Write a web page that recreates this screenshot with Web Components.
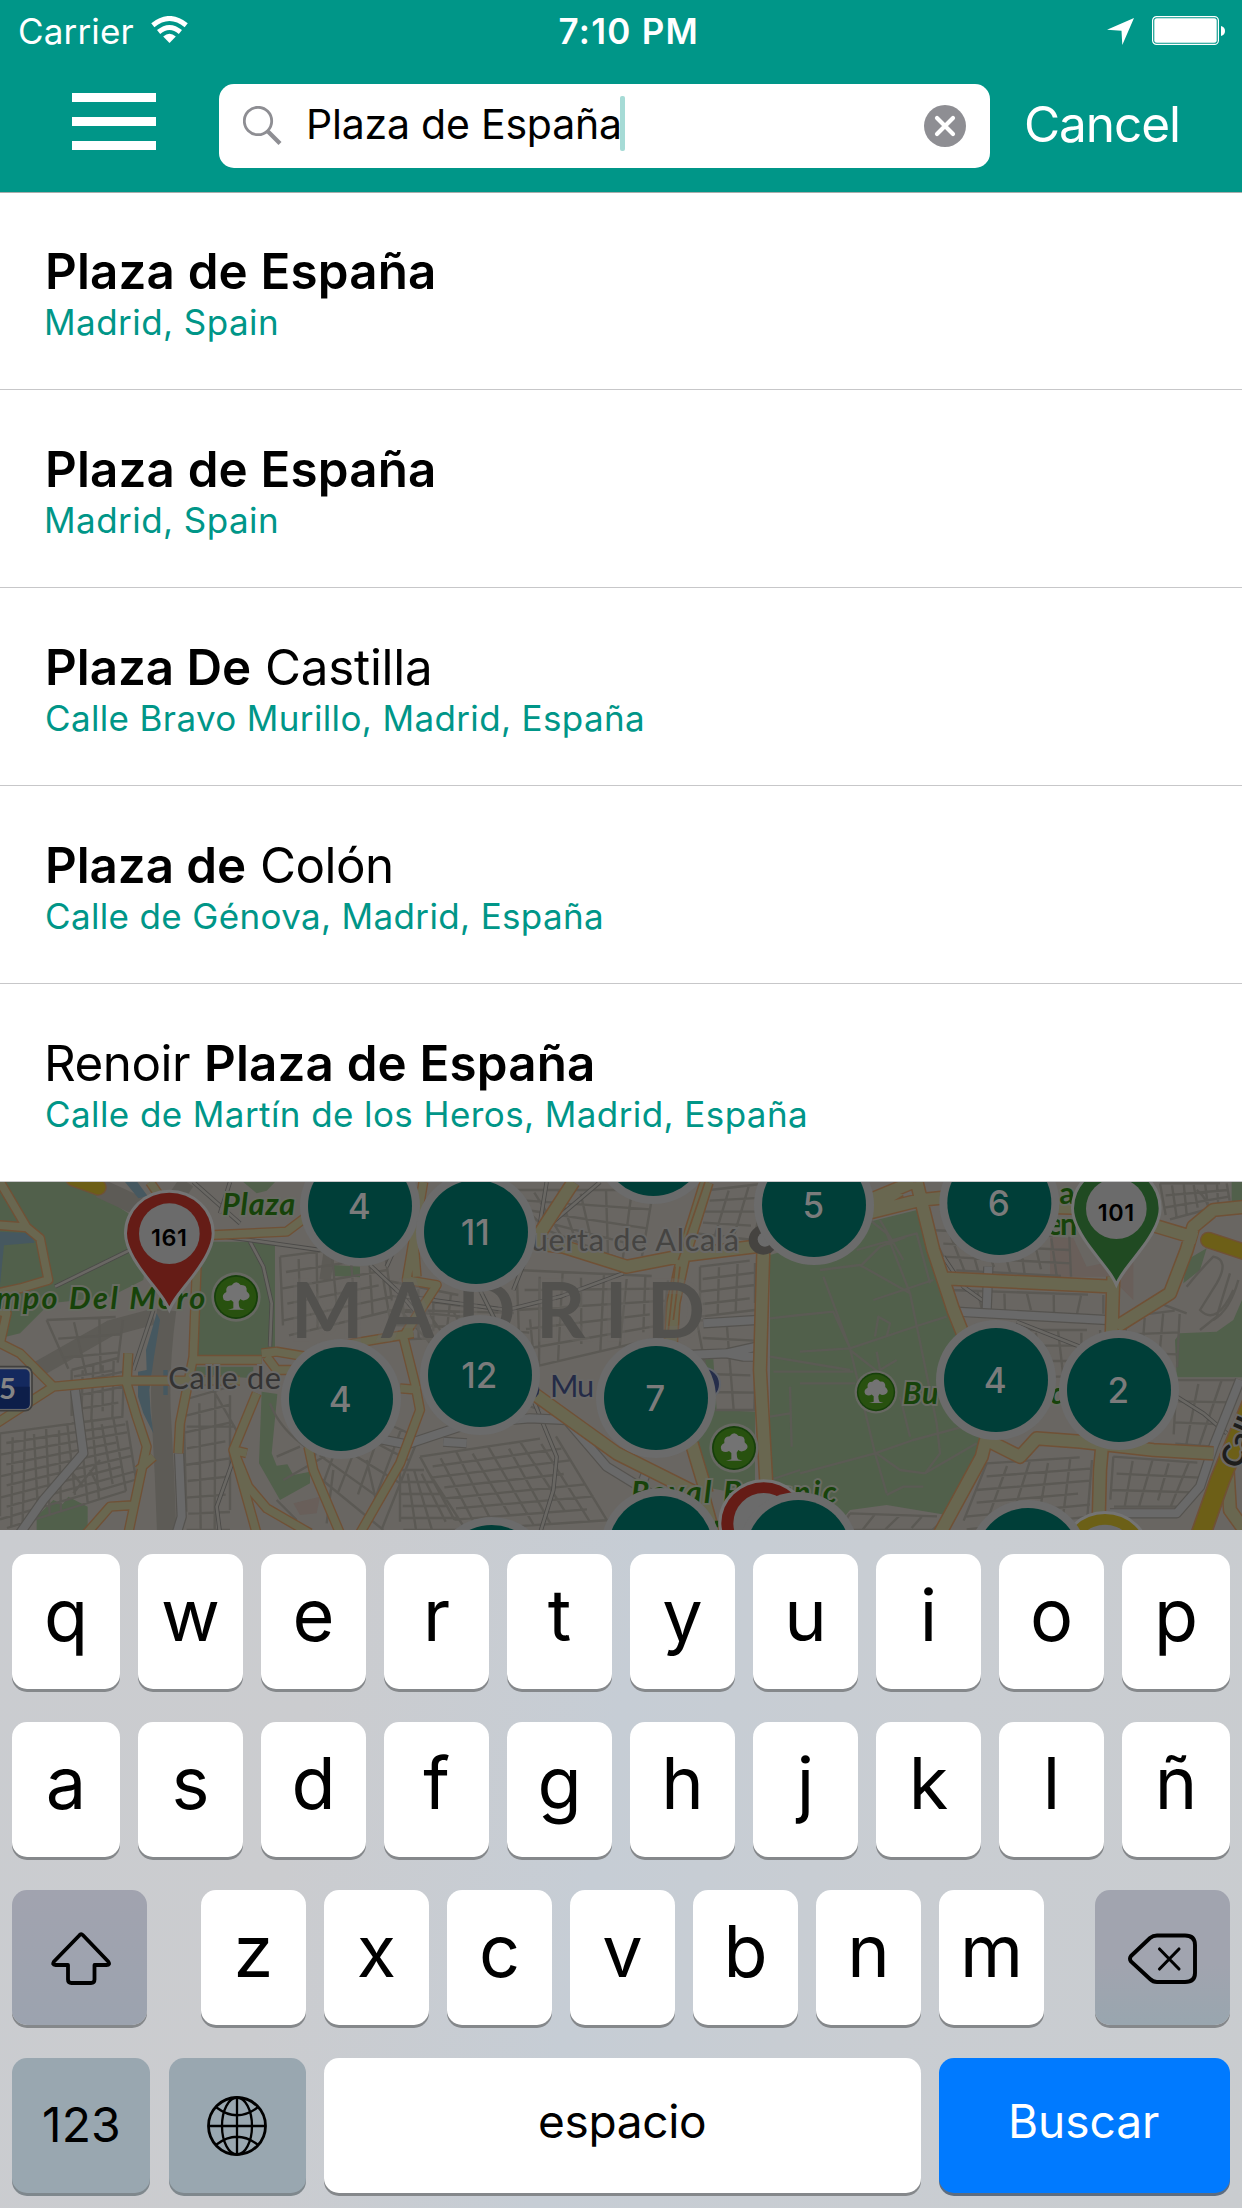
<!DOCTYPE html>
<html lang="es">
<head>
<meta charset="utf-8">
<title>Plaza de España</title>
<style>
html,body{margin:0;padding:0}
body{width:1242px;height:2208px;overflow:hidden;background:#fff;font-family:Inter,"Liberation Sans",sans-serif;color:#000}
</style>
</head>
<body>
<app-screen></app-screen>
<script>
function define(name, html, setup){
  customElements.define(name, class extends HTMLElement{
    connectedCallback(){
      if(this.shadowRoot) return;
      const root=this.attachShadow({mode:'open'});
      root.innerHTML=html;
      if(setup) setup.call(this,root);
    }
  });
}

define('status-bar',`<style>
:host{display:grid;grid-template-columns:1fr auto 1fr;height:60px;line-height:62px;font-size:35px;color:#fff;padding:0 16px 0 20px}
.l,.r{display:flex;align-items:flex-start}
.r{justify-content:flex-end}
.time{font-weight:600;margin-left:9px}
svg{display:block;flex:none}
.wifi{margin:16px 0 0 17px}
.loc{margin:18px 18px 0 0}
.bat{margin-top:16px}
</style>
<div class="l"><ink-text w="113.500">Carrier</ink-text>
<svg class="wifi" width="37" height="28" viewBox="0 0 37 28"><g fill="none" stroke="#fff" stroke-width="5"><path d="M1.800 9.200Q18.500 -4.200 35.200 9.200"/><path d="M7.600 16Q18.500 7 29.400 16"/></g><path d="M18.500 27L12.200 20.500Q18.500 15.200 24.800 20.500Z" fill="#fff"/></svg></div>
<ink-text class="time" w="136">7:10 PM</ink-text>
<div class="r"><svg class="loc" width="27" height="27" viewBox="0 0 27 27"><path d="M27 0L15.300 27L14.500 12.800L0 11.800Z" fill="#fff"/></svg>
<svg class="bat" width="74" height="29" viewBox="0 0 74 29"><rect x=".6" y=".6" width="65.800" height="27.800" rx="4" fill="none" stroke="#fff" stroke-width="1.200"/><rect x="2.300" y="2.300" width="62.400" height="24.400" rx="2.500" fill="#fff"/><path d="M69 10Q73 11 73 15Q73 19 69 20Z" fill="#fff"/></svg></div>`);

define('search-field',`<style>
:host{display:flex;align-items:center;box-sizing:border-box;width:771px;height:84px;border-radius:15px;background:#fff;color:#000;font-size:41px;line-height:84px;padding:0 24px}
svg{flex:none;display:block}
.q{margin-right:27px}
::slotted(ink-text){margin-bottom:4px}
i{width:5px;height:55px;border-radius:2px;background:#a6dbd6;margin:0 auto 5px 1px}
</style>
<svg class="q" width="39" height="40" viewBox="0 0 39 40"><circle cx="15" cy="15" r="13.700" fill="none" stroke="#8e8e93" stroke-width="2.800"/><path d="M25 25.500L37 37.500" stroke="#8e8e93" stroke-width="4.200"/></svg>
<slot></slot><i></i>
<svg width="42" height="42" viewBox="0 0 42 42"><circle cx="21" cy="21" r="21" fill="#8e8e93"/><path d="M13 13L29 29M29 13L13 29" stroke="#fff" stroke-width="4.200" stroke-linecap="round"/></svg>`);

define('nav-bar',`<style>
:host{display:flex;align-items:center;height:132px;padding-left:72px;color:#fff}
.menu{display:flex;flex-direction:column;gap:15px;width:84px;margin:0 63px 9px 0}
.menu b{height:9px;background:#fff}
.cancel{margin:0 0 4px 36px;font-size:49.500px;line-height:60px}
</style>
<div class="menu"><b></b><b></b><b></b></div>
<search-field><ink-text w="310">Plaza de España</ink-text></search-field>
<ink-text class="cancel" w="152">Cancel</ink-text>`);

define('result-row',`<style>
:host{display:block;box-sizing:border-box;height:198px;border-bottom:1px solid #c7c7c9;padding:50px 0 0 47px;background:#fff}
.t{display:flex;gap:17px;height:58px;line-height:58px;font-size:49.300px;margin-left:1px}
.s{height:44px;line-height:44px;font-size:35px;color:#009688}
</style><div class="t"><slot name="title"></slot></div><div class="s"><slot></slot></div>`);

define('result-list',`<style>
:host{display:flex;flex-direction:column;position:relative}
:host::before{content:"";height:1px;margin-bottom:-1px;background:#a9adac;z-index:1}
.b{font-weight:600}
</style>
<result-row><ink-text slot="title" class="b" w="385">Plaza de España</ink-text><ink-text w="229">Madrid, Spain</ink-text></result-row>
<result-row><ink-text slot="title" class="b" w="385">Plaza de España</ink-text><ink-text w="229">Madrid, Spain</ink-text></result-row>
<result-row><ink-text slot="title" class="b" w="202">Plaza De</ink-text><ink-text slot="title" w="162">Castilla</ink-text><ink-text w="595">Calle Bravo Murillo, Madrid, España</ink-text></result-row>
<result-row><ink-text slot="title" class="b" w="197">Plaza de</ink-text><ink-text slot="title" w="129">Colón</ink-text><ink-text w="554">Calle de Génova, Madrid, España</ink-text></result-row>
<result-row><ink-text slot="title" w="142">Renoir</ink-text><ink-text slot="title" class="b" w="385">Plaza de España</ink-text><ink-text w="758">Calle de Martín de los Heros, Madrid, España</ink-text></result-row>`);

const road=(d,w,fill,edge,e=7)=>`<path d="${d}" stroke="${edge}" stroke-width="${w+e}"/><path d="${d}" stroke="${fill}" stroke-width="${w}"/>`;
function mesh(a,b,c,d,nu,nv){
  const P=(u,v)=>[0,1].map(i=>((1-v)*((1-u)*a[i]+u*b[i])+v*((1-u)*d[i]+u*c[i])).toFixed(0)).join(' ');
  let s='';
  for(let i=0;i<=nu;i++){const j=(i%3)*.01;s+=`M${P(i/nu+j,i%2?.06:0)}L${P(i/nu-j,i%3?1:.86)}`}
  for(let i=0;i<=nv;i++)s+=`M${P(i%2?.05:0,i/nv)}L${P(i%3?1:.9,i/nv)}`;
  return s;
}
const streets=[
  mesh([0,790],[370,740],[420,950],[0,1080],11,9),
  mesh([215,600],[370,560],[370,740],[215,760],5,4),
  mesh([550,690],[690,650],[690,1080],[560,1080],3,8),
  mesh([140,450],[370,440],[350,600],[215,620],3,3),
  mesh([1000,690],[1250,800],[1150,1080],[930,900],5,4),
  mesh([1260,860],[1660,800],[1830,1050],[1380,1080],8,7),
  mesh([1200,900],[1280,900],[1400,1080],[1200,1080],4,5),
  mesh([1520,60],[1960,60],[1920,290],[1640,180],6,4),
  mesh([1550,300],[2000,320],[1990,500],[1560,600],7,5),
  mesh([1200,420],[1580,430],[1620,720],[1400,640],5,5),
  mesh([2100,290],[2265,270],[2265,420],[2100,440],3,4),
  mesh([2090,450],[2265,460],[2265,720],[2140,720],2,5),
  mesh([2130,60],[2300,40],[2260,210],[2090,190],3,4),
  mesh([2790,180],[3200,200],[3220,320],[2850,300],8,3),
  mesh([2850,360],[3310,375],[3310,440],[2880,420],6,1),
  mesh([2910,480],[3300,480],[3310,620],[2960,620],6,3),
  mesh([3480,40],[3680,40],[3690,100],[3500,150],6,3),
  mesh([2960,880],[3270,860],[3270,1040],[2880,1080],5,5),
  mesh([3340,860],[3620,880],[3560,1010],[3330,1010],5,3),
  mesh([3380,440],[3540,420],[3530,620],[3370,600],3,3),
  mesh([840,260],[1150,220],[1180,420],[850,500],6,5),
  mesh([1150,330],[1400,380],[1380,500],[1180,510],5,4),
  mesh([3530,630],[3726,630],[3640,830],[3520,820],3,3),
  mesh([2550,1030],[2840,1040],[2800,1080],[2520,1080],4,1),
  'M3590 60Q3640 100 3620 150M3560 350Q3600 300 3640 260Q3690 270 3650 340L3600 420Q3650 470 3700 360M3390 440L3480 400 3560 430M3640 450Q3690 420 3715 330M3690 310L3650 440 3600 480',
  'M640 660L720 800M560 770H700M850 930L990 850M830 860L900 830M810 700Q840 780 930 840M220 970L300 870M250 950L210 900M270 900L300 960M830 990L890 1050M1000 900L980 1060M1100 870L1130 1000'
].join('');
const parkWays='M2400 435L2500 425 2550 535 2400 545M2550 535L2760 465 2840 440M2460 300L2580 285 2730 370M2470 320L2550 535 2625 850 2660 970M2610 150L2660 190 2730 370 2810 760 2820 850 2775 910M2310 560L2550 600M2320 605H2560M2400 640H2565M2400 910L2625 850 2740 810 2890 770M2630 850L2700 900 2775 910 2930 820M2580 290L2640 230 2720 200M2640 150L2710 270M2570 240L2750 190 2790 340M2620 390L2800 330M2625 500L2635 440 2670 460 2660 500M2630 545L2640 600 2690 570M2310 445L2400 435M2310 930L2400 900M2550 540L2640 610M2700 680L2730 800M2660 975L2710 950H2770M2370 650L2375 830M2310 740L2370 730';
const yellow='#696750', edge='#705136';
const big=['M-10 165L80 172 120 205 145 330 60 355 -10 370','M0 36L80 172','M-10 420L20 430 0 520 60 550 160 650','M-10 760L160 650 360 632H720','M385 550L380 640 410 740 440 830 425 900 385 1090','M460 860L415 900','M640 195L860 185 920 140 960 100','M590 290L580 560 540 760 535 850','M570 570H785M785 550L830 545 920 560 1000 530 1240 490','M770 670L700 840 745 950 800 1015 930 1090','M740 850L700 840 770 1090','M925 830L940 900 1020 1090','M260 1090L330 1010 410 1005','M1270 36L1220 330 1310 345 1210 500 1245 640 1260 720 1200 880 1080 1090','M1200 655L1260 660','M1240 200L1250 320','M450 36L480 80','M800 560L830 600H880'];
const wide=['M1720 36L1600 220 1690 230 1880 290 2060 255 2260 230 2400 190','M2120 36L2050 260 2020 400 2010 560','M1600 670L1850 850 2110 980 2140 1090','M2075 820L2120 970','M2290 240L2280 600 2300 960 2290 1090','M2600 130L2760 90 2860 80','M2750 36L2800 240 2860 420 2900 520','M2610 90L2740 36','M2830 325L3340 350','M3340 320L3335 500 3300 900 3295 1090','M3350 470L3510 370 3560 240 3580 170 3640 120 3740 110','M3440 160L3590 205','M3100 110L3300 115','M2960 800L2945 860 2820 1090','M2960 810L3060 860 3110 805 3240 815 3460 840 3640 850','M3680 850L3690 1020 3740 1090','M2600 120L2700 60'];
const white=['M225 660L250 850 130 990 60 1090','M537 850L545 1040 530 1090','M1200 830L1410 760 1590 745 1700 750 1820 890 2000 1000','M2110 460L2270 450','M2060 555L2180 550 2270 530M2180 550L2230 560H2270','M2965 290L2960 420','M2870 425L3320 450','M3720 630L3640 830 3600 950 3530 1030 3330 1030','M1330 815L1400 820','M1050 790L1230 825','M1930 930L1950 880','M1480 640L1560 640'];
const rail=['M165 350L390 240','M460 420L400 600','M750 215L790 290 815 400 810 530','M640 195L960 240','M580 36L720 160','M690 36L660 130','M700 870L650 1010 660 1090','M1110 285L1200 370 1260 440','M1200 200L1160 290','M1640 36L1620 160 1540 360','M1800 36L1630 180','M1220 380L1520 420 1680 380 1870 310','M1440 360L1500 480','M1600 690L1670 860 1660 960 1620 1090','M2830 260L2890 350 2960 400','M3050 455L3240 530','M3530 680L3610 730 3680 790'];
const marker=(x,y,n)=>`<circle cx="${x}" cy="${y}" r="180" fill="#6b6b6b"/><circle cx="${x}" cy="${y}" r="156" fill="#003e38"/>${n?`<text x="${x-2}" y="${y+39}" text-anchor="middle" class="num">${n}</text>`:''}`;
const pin=(x,y,color,n)=>`<g transform="translate(${x} ${y})"><path d="M0 218C-24 165-127 75-127-1A127 122 0 0 1 127-1C127 75 24 165 0 218Z" fill="${color}" stroke="#747474" stroke-width="18" paint-order="stroke"/><circle r="91" fill="#6b6b6b"/>${n?`<text y="37" text-anchor="middle" class="pn">${n}</text>`:''}</g>`;
const tree=(x,y,s=1)=>`<g transform="translate(${x} ${y}) scale(${s})"><circle r="74" fill="#676862"/><circle r="66" fill="#163f0a"/><circle r="61" fill="#28510f"/><path d="M-37 8Q-45-7-29-15Q-32-35-13-35Q0-53 14-36Q34-38 32-17Q48-3 34 7Q20 14 13 6L8 14Q8 27 12 34L26 38H-24L-8 34V15L-15 9Q-25 16-37 8Z" fill="#737373"/></g>`;

define('map-view',`<style>
:host{display:block;height:348px}
svg{display:block}
text{font-family:Lato,"Open Sans",sans-serif}
.num{font:500 105px Inter,sans-serif;fill:#7b7b7b}
.pn{font:600 70px Inter,sans-serif;fill:#000;letter-spacing:2px}
.g{font-weight:700;font-style:italic;fill:#17430a;stroke:#686b62;stroke-width:12;paint-order:stroke}
.p{fill:#333;stroke:#696866;stroke-width:12;paint-order:stroke}
</style>
<svg width="1242" height="348" viewBox="0 36 3726 1044">
<rect y="36" width="3726" height="1044" fill="#696662"/>
<g fill="#51604b">
<path d="M0 36H210L300 75 385 130 440 250 430 330 330 380 150 400 60 490 0 505ZM730 36H825L800 62 770 70ZM610 215H825V560L580 555ZM1000 285L1080 290V322L1000 318ZM575 590H760V625L575 612ZM785 665L832 672 815 850 830 887 862 883 880 915 930 905V940L840 990 777 880ZM110 1080V1040L160 990 188 1003 205 980 263 1010V1080Z"/>
<path d="M2310 255L2500 200 2620 152 2760 118 2835 330 2890 500 2945 790 2940 860 2840 1035 2660 1005 2550 1020 2500 1080H2310ZM2090 568H2140L2150 720 2265 725V980L2110 950 2060 700ZM3525 510L3540 490 3650 485 3700 450 3726 390V622H3530ZM3695 36H3726V100H3695ZM3560 270L3620 235 3600 300 3550 340Z"/></g>
<path d="M3150 200L3220 205 3260 290 3400 260V390L3330 320 3150 320ZM880 1000L960 980 950 1030 900 1035Z" fill="#695f5a"/>
<g fill="none" stroke="#5b5954" stroke-linejoin="round">
<g stroke="#5d5b56"><path stroke-width="58" d="M300 55L430 115M500 420Q475 600 485 760T500 1090"/><path stroke-width="48" d="M110 600L330 475 460 440M530 80L560 36"/><path stroke-width="34" d="M990 230L975 330"/></g>
<path d="${streets}" stroke-width="7"/>
<path d="${parkWays}" stroke="#5b5b54" stroke-width="7"/>
</g>
<path d="M0 185L95 190 103 218 12 226 0 345ZM375 36H412L443 78 415 85ZM470 430L480 450 462 560 448 660 452 730 460 790 430 730 414 680V605L440 600 438 540ZM490 600H503V675H490Z" fill="#465860"/>
<g fill="none" stroke-linejoin="round">
${rail.map(d=>road(d,8,'#696763','#4b4a48',5)).join('')}
${white.map(d=>road(d,24,'#696969','#55534f')).join('')}
<path d="${big.join('')}" stroke="${edge}" stroke-width="31"/><path d="${wide.join('')}" stroke="${edge}" stroke-width="44"/>
<path d="${big.join('')}" stroke="${yellow}" stroke-width="23"/><path d="${wide.join('')}" stroke="${yellow}" stroke-width="35"/>
<path d="M2115 36L2035 270M2025 290L2005 480M2040 290L2020 450" stroke="${edge}" stroke-width="5"/>
<path d="M220 25L295 52" stroke="${edge}" stroke-width="50" stroke-linecap="round"/><path d="M220 25L295 52" stroke="#6d5f17" stroke-width="42" stroke-linecap="round"/>
<path d="M3625 210L3740 248" stroke="${edge}" stroke-width="50" stroke-linecap="round"/><path d="M3625 210L3740 248" stroke="#6d5f17" stroke-width="42" stroke-linecap="round"/>
${road('M3760 690L3660 930 3600 1100',54,'#6d5f17',edge,10)}
</g>
<g fill="#52514e" font-size="230" font-weight="700" stroke="#696763" stroke-opacity=".35" stroke-width="22" paint-order="stroke"><text y="503" x="873 1144 1372 1608 1814 1940">MADRID</text></g>
<g font-size="92">
<text class="g" x="666" y="135" textLength="220">Plaza</text>
<text class="g" x="-12" y="416" textLength="628">mpo Del Moro</text>
<text class="p" x="505" y="657" textLength="338">Calle de</text>
<text class="p" x="1592" y="243" textLength="625" style="fill:#454442">uerta de Alcalá</text>
<text class="p" x="1650" y="681" textLength="132" style="fill:#242b47">Mu</text>
<text class="g" x="2708" y="702" textLength="108">Bu</text><text class="g" x="3150" y="702">c</text>
<text class="g" x="1893" y="998" textLength="617">Royal Botanic</text>
<text class="g" style="font-style:normal" x="3178" y="102">a</text><text class="g" style="font-style:normal" x="3140" y="194" textLength="92">en</text>
<text class="p" transform="translate(3718 900) rotate(-67)" font-weight="700" style="fill:#1d1d1c">Calle</text></g>
<path d="M1272 108L1285 106M2150 1052V1072" stroke="#17430a" stroke-width="10"/>
<circle cx="2290" cy="210" r="44" fill="#454340"/><circle cx="2295" cy="208" r="22" fill="#6b6b6b"/>
<circle cx="2112" cy="642" r="48" fill="#252d4a" stroke="#62656b" stroke-width="6"/><circle cx="1590" cy="660" r="28" fill="#252d4a"/>
<rect x="-50" y="590" width="146" height="132" rx="20" fill="#737373" stroke="#41403e" stroke-width="5"/><rect x="-50" y="598" width="139" height="118" rx="14" fill="#14295e"/><path d="M0 650H89V702Q89 716 75 716H0Z" fill="#0d1e49"/><text x="-3" y="687" style="font:700 88px Lato,sans-serif;fill:#858585">5</text>
${tree(708,381)}${tree(2202,834)}${tree(2628,666,.87)}
${marker(1960,-78)}${marker(1080,108,4)}${marker(1428,186,11)}${marker(2442,105,5)}${marker(2998,99,6)}${marker(1023,687,4)}${marker(1440,615,12)}${marker(1968,684,7)}${marker(2988,630,4)}${marker(3357,660,2)}
${pin(508,191,'#651c16',161)}${pin(3349,116,'#204a22',101)}
${pin(2291,1060,'#651c16')}${pin(3315,1155,'#6c6017')}
${marker(1475,1221)}${marker(1982,1134)}${marker(2395,1146)}${marker(3084,1170)}
</svg>`);

define('key-cap',`<style>
:host{display:flex;align-items:center;justify-content:center;box-sizing:border-box;flex:0 0 105px;height:135px;border-radius:15px;background:#fff;box-shadow:0 3px 0 #85888b;font-size:72px;line-height:100px;font-weight:400;padding-bottom:13px}
:host([edge]){flex-basis:108px}
:host([dark]){background:#a0a5b0;padding-bottom:0}
:host([num]){background:#99a7b0;font-size:48px;padding-bottom:2px;box-shadow:0 3px 0 #7f888d}
:host([word]){font-size:46px;padding-bottom:9px}
:host([go]){background:#007aff;color:#fff;box-shadow:0 3px 0 #5d6d80}
</style><slot></slot>`);

define('key-board',`<style>
:host{display:flex;flex-direction:column;gap:33px;box-sizing:border-box;height:678px;padding:24px 12px 0;background:linear-gradient(100deg,#caccd0 0,#cbcccf 25%,#c6cdd5 48%,#c9cdd2 72%,#c9cccf 100%)}
div{display:flex;gap:18px}
svg{display:block}
.shift{flex-basis:135px;margin-right:36px;background:linear-gradient(#a1a3af,#9ca3af)}
.del{flex-basis:135px;margin-left:33px;background:linear-gradient(#a1a4af 55%,#99a6af)}
.n{flex-basis:138px;margin-right:1px}.w{flex-basis:137px}.space{flex-basis:597px}.go{flex-basis:291px}
.go ink-text{margin-left:2px}
</style><div id="a"></div><div id="b"></div>
<div id="c"><key-cap dark class="shift"><svg width="60" height="54" viewBox="0 0 60 54" style="margin:3px 0 0 3px"><path d="M28.500 3.200L3 29.500Q.8 33 4.500 33H17V47.500Q17 51 20.500 51H40Q43.500 51 43.500 47.500V33H55.500Q59.500 33 57.200 29.500L32 3.200Q30 1.200 28.500 3.200Z" fill="none" stroke="#000" stroke-width="3.800" stroke-linejoin="round"/></svg></key-cap></div>
<div><key-cap dark num class="n"><ink-text w="74">123</ink-text></key-cap>
<key-cap dark num class="w"><svg width="60" height="60" viewBox="0 0 60 60" fill="none" stroke="#000" stroke-width="2.300" style="margin:3px 2px 0 0"><circle cx="30" cy="30" r="28.500" stroke-width="2.800"/><ellipse cx="30" cy="30" rx="15" ry="28.500"/><path d="M1.500 30H58.500M30 1.500V58.500M9.500 11.500Q30 27 50.500 11.500M9.500 48.500Q30 33 50.500 48.500"/></svg></key-cap>
<key-cap word class="space"><ink-text w="165">espacio</ink-text></key-cap>
<key-cap word go class="go"><ink-text w="147">Buscar</ink-text></key-cap></div>`,function(root){
  const fill=(id,keys,edges)=>{const row=root.getElementById(id);[...keys].forEach((k,i)=>{const e=document.createElement('key-cap');e.textContent=k;if(edges&&(i===0||i===9))e.setAttribute('edge','');row.append(e)});return row};
  fill('a','qwertyuiop',true);fill('b','asdfghjklñ',true);
  const del=document.createElement('key-cap');del.className='del';del.setAttribute('dark','');
  del.innerHTML='<svg width="70" height="52" viewBox="0 0 70 52" style="margin:3px 0 0 0" fill="none" stroke="#000"><path d="M3 23L22 5Q25 2.500 29 2.500H57Q67 2.500 67 12V40Q67 49 57 49H29Q25 49 22 46L3 28.500Q1 25.700 3 23Z" stroke-width="3.900"/><path d="M31.500 16L51 36M51 16L31.500 36" stroke-width="3.100" stroke-linecap="round"/></svg>';
  fill('c','zxcvbnm').append(del);
});

define('app-screen',`<style>
:host{display:flex;flex-direction:column;width:1242px;height:2208px;overflow:hidden}
header{background:#009688;height:192px}
</style><header><status-bar></status-bar><nav-bar></nav-bar></header><result-list></result-list><map-view></map-view><key-board></key-board>`);

/* Text tracked so that its ink spans exactly the width given in "w".
   Registered last: the surrounding styles are in place when it measures. */
const pen=document.createElement('canvas').getContext('2d');
define('ink-text',`<style>
:host{display:block;flex:none;white-space:nowrap;font-kerning:normal}
span{display:inline-block}
</style><span><slot></slot></span>`,function(root){
  const w=+this.getAttribute('w'), cs=getComputedStyle(this), text=this.textContent;
  pen.font=`${cs.fontWeight} ${cs.fontSize} ${cs.fontFamily}`;
  const m=pen.measureText(text);
  const ink=m.actualBoundingBoxLeft+m.actualBoundingBoxRight;
  this.style.width=w+'px';
  const s=root.querySelector('span').style;
  s.letterSpacing=((w-ink)/(text.length-1)).toFixed(3)+'px';
  s.marginLeft=m.actualBoundingBoxLeft+'px';
});
</script>
</body>
</html>
